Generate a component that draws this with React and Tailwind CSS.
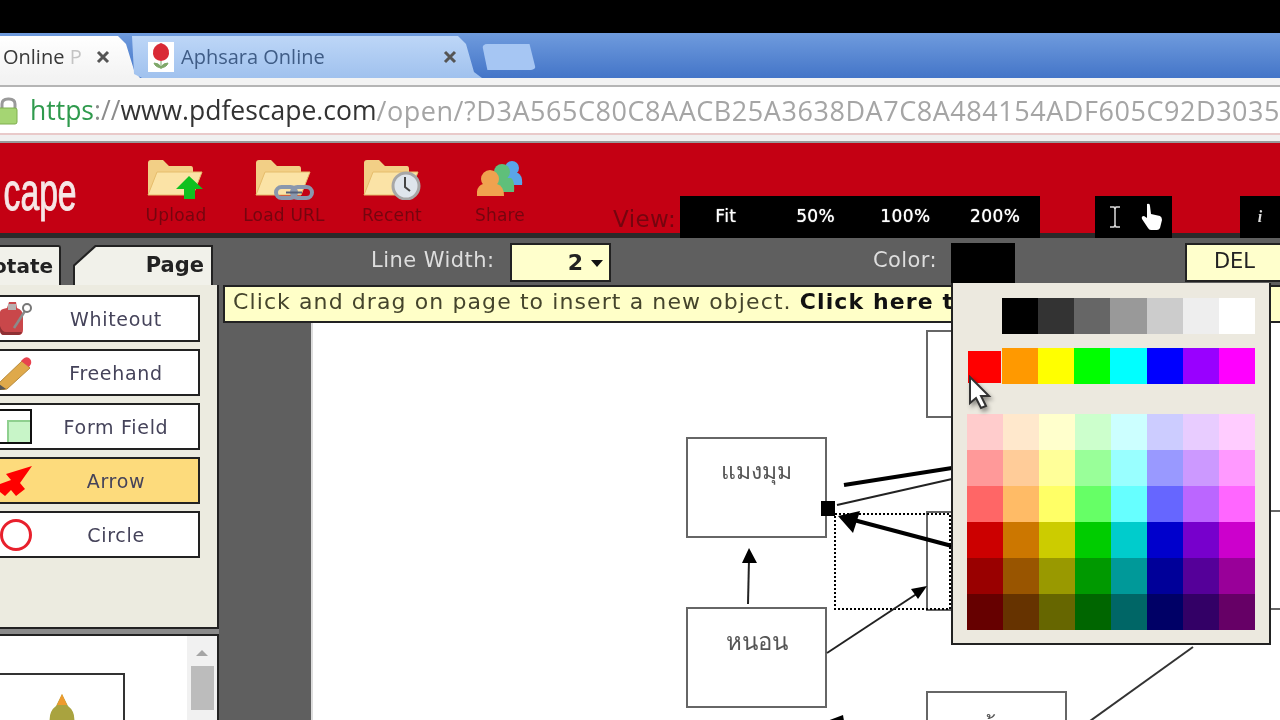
const UI = "font-['DejaVu_Sans',sans-serif]";

const GRAYS = ['#000000', '#333333', '#666666', '#999999', '#cccccc', '#eeeeee', '#ffffff'];
const HUES = ['#ff9900', '#ffff00', '#00ff00', '#00ffff', '#0000ff', '#9900ff', '#ff00ff'];
const SHADES = [
  '#ffcccc', '#ffe8cc', '#ffffcc', '#ccffcc', '#ccffff', '#ccccff', '#e8ccff', '#ffccff',
  '#ff9999', '#ffcc99', '#ffff99', '#99ff99', '#99ffff', '#9999ff', '#cc99ff', '#ff99ff',
  '#ff6666', '#ffbb66', '#ffff66', '#66ff66', '#66ffff', '#6666ff', '#bb66ff', '#ff66ff',
  '#cc0000', '#cc7700', '#cccc00', '#00cc00', '#00cccc', '#0000cc', '#7700cc', '#cc00cc',
  '#990000', '#995500', '#999900', '#009900', '#009999', '#000099', '#550099', '#990099',
  '#660000', '#663300', '#666600', '#006600', '#006666', '#000066', '#330066', '#660066',
];

function Folder({ children }) {
  return (
    <svg width="60" height="42" viewBox="0 0 60 42">
      <path d="M2 5q0-3 3-3h12l6 6h22q2 0 2 3v26H2z" fill="#f2cf86" />
      <path d="M2 37 11 14h45l-9 23z" fill="#fbe3a6" stroke="#e6bd6c" />
      {children}
    </svg>
  );
}

function UploadIcon() {
  return (
    <Folder>
      <path d="M43 18 57 31h-8v10H38V31h-8z" fill="#0fc01f" />
    </Folder>
  );
}

function LinkIcon() {
  return (
    <Folder>
      <g fill="none" stroke="#8a97ad" strokeWidth="4">
        <rect x="22" y="29" width="20" height="11" rx="5.500" />
        <rect x="38" y="29" width="20" height="11" rx="5.500" />
      </g>
      <path d="M32 34.500h16" stroke="#56607a" strokeWidth="2" />
    </Folder>
  );
}

function RecentIcon() {
  return (
    <Folder>
      <circle cx="44" cy="28" r="13" fill="#dfe5ec" stroke="#a7a7a7" strokeWidth="3" />
      <path d="M43 19v10l5 4" fill="none" stroke="#444" strokeWidth="2" />
    </Folder>
  );
}

function ShareIcon() {
  return (
    <svg width="46" height="38" viewBox="0 0 46 38">
      <circle cx="35" cy="8" r="7" fill="#5aa5e8" />
      <path d="M27 13h14q5 3 4 12H30z" fill="#5aa5e8" />
      <circle cx="25" cy="12" r="8" fill="#5fbf7a" />
      <path d="M16 18h18q4 3 3 14H18z" fill="#5fbf7a" />
      <circle cx="13" cy="19" r="9" fill="#f0a24f" />
      <path d="M0 36q-1-10 6-12h14q7 2 7 12z" fill="#f0a24f" />
    </svg>
  );
}

function BottleIcon() {
  return (
    <svg width="32" height="34" viewBox="0 0 32 34">
      <path d="M9 0h7l1 6q6 2 6 8v14q0 5-5 5H4q-4 0-4-5V10q0-3 7-4z" fill="#c9474a" />
      <path d="M0 28q0 5 4 5h14q3 0 4-3H6q-4 0-6-6z" fill="#8e3034" />
      <path d="M8 2h8v6H8z" fill="#b9b0b0" />
      <path d="M14 26 25 9" stroke="#8b8b8b" strokeWidth="2.500" />
      <circle cx="27" cy="6" r="4" fill="#fff" stroke="#777" strokeWidth="2" />
    </svg>
  );
}

function PencilIcon() {
  return (
    <svg width="32" height="34" viewBox="0 0 32 34">
      <path d="M-1 27 22 5l8 7L7 33l-7 1z" fill="#dfa94a" stroke="#b88a3a" />
      <path d="M23 3q3-3 6-1 3 2 2 6l-2 3-8-6z" fill="#e8434e" />
      <path d="M-1 28l7 5-6 1z" fill="#555" />
    </svg>
  );
}

function FieldIcon() {
  return (
    <div className="flex h-[35px] w-[33px] items-end justify-end border-2 border-l-0 border-[#111] bg-white">
      <div className="h-[22px] w-[23px] border-l-2 border-t-2 border-[#8fd08f] bg-[#c8f5c8]" />
    </div>
  );
}

function ArrowIcon() {
  return (
    <svg width="32" height="34" viewBox="0 0 32 34">
      <path d="M32 2 6 10l5 6-11 4v8l5 4 6-6 5 6 9-7-5-6z" fill="#ff0000" />
    </svg>
  );
}

function CircleIcon() {
  return <div className="h-8 w-8 rounded-full border-[3px] border-[#e8202c] bg-white" />;
}

function ToolButton({ label, active, children }) {
  return (
    <div className={`flex h-[47px] w-[200px] items-center border-2 border-l-0 border-[#222] ${active ? 'bg-[#fddb7c]' : 'bg-white'}`}>
      <div className="flex w-[34px] shrink-0 items-center justify-center pr-[2px]">{children}</div>
      <span className={`flex-1 pt-[1px] text-center text-[19px] tracking-[0.7px] text-[#45435a] ${UI}`}>{label}</span>
    </div>
  );
}

function ToolbarItem({ label, children }) {
  return (
    <div className="flex w-[108px] flex-col items-center">
      <div className="flex h-[42px] items-center justify-center">{children}</div>
      <span className={`mt-[5px] whitespace-nowrap text-[17px] leading-5 tracking-[0.2px] text-[#75050f] ${UI}`}>{label}</span>
    </div>
  );
}

function TabClose({ className }) {
  return (
    <svg width="14" height="14" viewBox="0 0 14 14" className={className}>
      <path d="M2 2l10 10M12 2 2 12" stroke="#555" strokeWidth="3" />
    </svg>
  );
}

function Rose() {
  return (
    <div className="flex h-[30px] w-[26px] shrink-0 items-center justify-center bg-white">
      <svg width="20" height="28" viewBox="0 0 20 28">
        <path d="M10 0q9 3 8 11-1 6-8 7-7-1-8-7Q1 3 10 0z" fill="#d92a36" />
        <path d="M10 18v8M10 25q-6-1-7-5 5 0 7 4 2-4 7-4-1 4-7 5z" fill="#7fa86a" stroke="#7fa86a" />
      </svg>
    </div>
  );
}

function TabStrip() {
  return (
    <div className="flex h-[45px] shrink-0 items-end bg-gradient-to-b from-[#6f9bdd] to-[#4475c8]">
      <div className="flex h-[42px] w-[140px] items-center bg-gradient-to-b from-white to-[#f3f3f3] pl-[3px] [clip-path:polygon(0_0,118px_0,126px_8px,134px_34px,140px_100%,0_100%)]">
        <span className="w-[86px] whitespace-nowrap font-['Open_Sans',sans-serif] text-[20px] text-[#3a3a3a]">
          Online <span className="text-[#c4c4c4]">P</span>
        </span>
        <TabClose className="ml-[7px]" />
      </div>
      <div className="-ml-[8px] flex h-[42px] w-[350px] items-center bg-gradient-to-b from-[#bdd6f7] to-[#a0c1ee] pl-[16px] [clip-path:polygon(0_0,326px_0,334px_8px,342px_36px,350px_100%,10px_100%,2px_38px)]">
        <Rose />
        <span className="ml-[7px] w-[262px] font-['Open_Sans',sans-serif] text-[20px] text-[#3f5c86]">Aphsara Online</span>
        <TabClose />
      </div>
      <div className="mb-[8px] h-[26px] w-[54px] rounded-[5px] bg-[#a6c6f3] [clip-path:polygon(0_0,88%_0,100%_100%,10%_100%)]" />
    </div>
  );
}

function AddressBar() {
  return (
    <div className="shrink-0">
      <div className="h-[9px] border-b-2 border-[#b5b5b5] bg-[#f3f3f3]" />
      <div className="flex h-[46px] items-center overflow-hidden whitespace-nowrap bg-white pt-[2px] font-['Open_Sans',sans-serif] text-[26.500px]">
        <svg width="18" height="28" viewBox="0 0 18 28" className="mr-[12px] shrink-0">
          <path d="M2 12V7q0-5 6-5h1q6 0 6 5v5" fill="none" stroke="#9a9a9a" strokeWidth="3" />
          <rect x="-2" y="11" width="19" height="16" rx="2" fill="#a5d573" stroke="#7fae4e" />
        </svg>
        <span className="text-[#2f9a4d]">https</span>
        <span className="text-[#8c8c8c]">://</span>
        <span className="text-[#333]">www.pdfescape.com</span>
        <span className="text-[27px] tracking-[0.55px] text-[#a5a5a5]">/open/?D3A565C80C8AACB25A3638DA7C8A484154ADF605C92D3035</span>
      </div>
      <div className="h-[10px] border-y-2 border-t-[#e9caca] border-b-[#9a9a9a] bg-[#f0f0f0]" />
    </div>
  );
}

function RedToolbar() {
  return (
    <div className="flex h-[95px] shrink-0 items-end bg-[#c40013] shadow-[inset_0_-5px_0_#2a2a2a]">
      <div className="flex h-[95px] w-[77px] shrink-0 items-start justify-end pt-[22px]">
        <span className="origin-right scale-x-[0.66] font-['Liberation_Sans',sans-serif] text-[51px] leading-[56px] text-[#f6e6e6] [-webkit-text-stroke:1px_#f6e6e6]">cape</span>
      </div>
      <div className="ml-[45px] flex h-[95px] items-start pt-[15px]">
        <ToolbarItem label="Upload"><UploadIcon /></ToolbarItem>
        <ToolbarItem label="Load URL"><LinkIcon /></ToolbarItem>
        <ToolbarItem label="Recent"><RecentIcon /></ToolbarItem>
        <ToolbarItem label="Share"><ShareIcon /></ToolbarItem>
      </div>
      <span className={`mb-[5px] ml-[59px] w-[67px] text-[23px] leading-7 tracking-[0.4px] text-[#75050f] ${UI}`}>View:</span>
      <div className={`grid h-[42px] w-[360px] grid-cols-4 items-center bg-black pl-[1px] text-center text-[17px] tracking-[0.4px] text-white [text-shadow:0_0_1px_#fff] ${UI}`}>
        <span>Fit</span>
        <span>50%</span>
        <span>100%</span>
        <span>200%</span>
      </div>
      <div className="ml-[55px] flex h-[42px] w-[77px] items-center gap-[19px] bg-black pl-[13px]">
        <svg width="14" height="24" viewBox="0 0 14 24">
          <path d="M2 2h4l1 2 1-2h4M7 4v16M2 22h4l1-2 1 2h4" fill="none" stroke="#ddd" strokeWidth="1.500" />
        </svg>
        <svg width="22" height="28" viewBox="0 0 22 28">
          <path d="M6 1q3-1 3 2l1 8 9 2q2 1 2 4l-2 8q-1 2-3 2H10q-2 0-3-2l-6-9q-1-3 2-3l3 2z" fill="#fff" />
        </svg>
      </div>
      <div className="ml-[68px] flex h-[42px] w-[40px] items-center justify-center bg-black font-['Liberation_Serif',serif] text-[16px] font-bold italic text-[#ddd]">i</div>
    </div>
  );
}

function ColorPopover() {
  return (
    <div className="absolute left-0 top-[40px] z-10 flex h-[362px] w-[320px] flex-col border-2 border-t-0 border-[#222] bg-[#ece9df] pl-[14px] pt-[15px]">
      <div className="ml-[35px] grid w-[253px] grid-cols-7">
        {GRAYS.map((c) => (
          <div key={c} className="h-[36px]" style={{ background: c }} />
        ))}
      </div>
      <div className="mt-[14px] flex">
        <div className="ml-[1px] mt-[3px] h-[32px] w-[33px] bg-[#ff0000]" />
        <div className="ml-[1px] grid w-[253px] grid-cols-7">
          {HUES.map((c) => (
            <div key={c} className="h-[36px]" style={{ background: c }} />
          ))}
        </div>
      </div>
      <div className="mt-[30px] grid w-[288px] grid-cols-8">
        {SHADES.map((c) => (
          <div key={c} className="h-[36px]" style={{ background: c }} />
        ))}
      </div>
      <svg width="28" height="36" viewBox="0 0 28 36" className="absolute left-[15px] top-[92px] drop-shadow-[2px_3px_2px_rgba(0,0,0,0.4)]">
        <path d="M2 2v26l6-5 5 10 5-2-5-10h8z" fill="#fff" stroke="#333" strokeWidth="2" />
      </svg>
    </div>
  );
}

function OptionsBar() {
  return (
    <div className={`flex h-[47px] shrink-0 bg-[#5f5f5f] ${UI}`}>
      <div className="mt-[7px] flex h-[40px] w-[61px] items-center justify-end rounded-tr-[3px] border-2 border-b-0 border-l-0 border-[#222] bg-[#f1f1ea] pb-[1px] pr-[6px] text-[20px] font-bold text-[#222]">
        <span>otate</span>
      </div>
      <div className="ml-[12px] mt-[7px] flex h-[40px] w-[140px] items-center justify-end bg-[#222] [clip-path:polygon(22px_0,100%_0,100%_100%,0_100%,0_20px)]">
        <div className="mr-[2px] mt-[2px] flex h-[38px] w-[136px] items-center justify-end bg-[#f1f1ea] pr-[7px] text-[21px] font-bold text-[#222] [clip-path:polygon(21px_0,100%_0,100%_100%,0_100%,0_19px)]">
          Page
        </div>
      </div>
      <span className="ml-[158px] mt-[8px] w-[139px] text-[21px] leading-7 tracking-[0.45px] text-[#dedede]">Line Width:</span>
      <div className="mt-[5px] flex h-[39px] w-[101px] items-center justify-end gap-[8px] border-2 border-[#222] bg-[#ffffcc] pr-[6px] text-[22px] font-bold text-[#222]">
        <span>2</span>
        <span className="mt-[2px] h-0 w-0 border-x-[6px] border-t-[7px] border-x-transparent border-t-[#111]" />
      </div>
      <span className="ml-[262px] mt-[8px] w-[78px] text-[21px] leading-7 tracking-[0.4px] text-[#dedede]">Color:</span>
      <div className="relative mt-[5px] h-[42px] w-[64px] bg-black">
        <ColorPopover />
      </div>
      <div className="ml-[170px] mt-[5px] flex h-[39px] flex-1 items-center justify-center border-2 border-r-0 border-[#222] bg-[#ffffcc] pb-[1px] pl-[2px] text-[21px] text-[#222]">DEL</div>
    </div>
  );
}

function ToolPanel() {
  return (
    <div className="flex w-[219px] shrink-0 flex-col">
      <div className="flex h-[344px] shrink-0 flex-col gap-[7px] border-b-2 border-r-2 border-[#222] bg-[#ecebe0] pt-[10px]">
        <ToolButton label="Whiteout"><BottleIcon /></ToolButton>
        <ToolButton label="Freehand"><PencilIcon /></ToolButton>
        <ToolButton label="Form Field"><FieldIcon /></ToolButton>
        <ToolButton label="Arrow" active><ArrowIcon /></ToolButton>
        <ToolButton label="Circle"><CircleIcon /></ToolButton>
      </div>
      <div className="h-[5px] shrink-0 bg-[#8a8a8a]" />
      <div className="flex min-h-0 flex-1 border-r-2 border-t-2 border-[#222] bg-white">
        <div className="min-h-0 flex-1 pt-[37px]">
          <div className="flex h-[60px] w-[125px] justify-center border-r-2 border-t-2 border-[#333] pt-[19px]">
            <svg width="32" height="30" viewBox="0 0 32 30">
              <path d="M16 0 22 12q8 6 6 18H4Q2 18 10 12z" fill="#a9a33f" />
              <path d="M16 0l5 11H11z" fill="#ee9a2e" />
            </svg>
          </div>
        </div>
        <div className="flex w-[30px] flex-col items-center bg-[#f1f1f1] pt-[14px]">
          <span className="h-0 w-0 border-x-[6px] border-b-[6px] border-x-transparent border-b-[#a5a5a5]" />
          <div className="mt-[10px] h-[44px] w-[23px] bg-[#bcbcbc]" />
        </div>
      </div>
    </div>
  );
}

function DiagramBox({ className, children }) {
  return (
    <div className={`absolute flex justify-center border-2 border-[#666] bg-white pt-[19px] font-['Liberation_Serif',serif] text-[23px] leading-7 text-[#555] ${className}`}>
      {children}
    </div>
  );
}

function Diagram() {
  return (
    <div className="relative flex-1 overflow-hidden border-l-2 border-[#ddd] bg-white">
      <DiagramBox className="left-[373px] top-[114px] h-[101px] w-[141px]">แมงมุม</DiagramBox>
      <DiagramBox className="left-[373px] top-[284px] h-[101px] w-[141px] text-[24px]">หนอน</DiagramBox>
      <DiagramBox className="left-[613px] top-[7px] h-[88px] w-[141px]" />
      <DiagramBox className="left-[613px] top-[188px] h-[100px] w-[141px]" />
      <DiagramBox className="left-[613px] top-[368px] h-[101px] w-[141px]">ค้น</DiagramBox>
      <DiagramBox className="left-[853px] top-[187px] h-[100px] w-[141px]" />
      <svg className="absolute inset-0" width="967" height="398" viewBox="313 322 967 398">
        <path d="M844 484 952 467" stroke="#000" strokeWidth="4" />
        <path d="M837 504 952 478" stroke="#222" strokeWidth="2" />
        <rect x="835" y="513" width="115" height="95" fill="none" stroke="#000" strokeWidth="2" strokeDasharray="2 2" />
        <path d="M952 545 850 518" stroke="#000" strokeWidth="4" />
        <path d="M838 515 860 510 853 532z" fill="#000" />
        <path d="M748 603 749 558" stroke="#222" strokeWidth="2" />
        <path d="M749 547 757 562H742z" fill="#000" />
        <path d="M827 652 918 592" stroke="#222" strokeWidth="2" />
        <path d="M927 585 918 598 911 588z" fill="#000" />
        <path d="M1193 646 1090 720" stroke="#333" strokeWidth="2" />
        <path d="M827 720 843 714 844 720z" fill="#000" />
        <rect x="821" y="500" width="14" height="15" fill="#000" />
      </svg>
    </div>
  );
}

function Workspace() {
  return (
    <div className="flex min-h-0 flex-1 flex-col bg-[#5f5f5f]">
      <div className={`ml-[4px] flex h-[38px] shrink-0 items-center overflow-hidden whitespace-nowrap border-2 border-r-0 border-[#222] bg-[#ffffc8] pb-[5px] pl-[8px] text-[22px] tracking-[1.1px] text-[#45452c] ${UI}`}>
        <span>Click and drag on page to insert a new object.&nbsp;</span>
        <b className="text-[#111]">Click here to close</b>
      </div>
      <div className="flex min-h-0 flex-1">
        <div className="w-[92px] shrink-0" />
        <Diagram />
      </div>
    </div>
  );
}

export default function App() {
  return (
    <div className="flex h-[720px] w-[1280px] flex-col overflow-hidden bg-white blur-[0.5px]">
      <div className="h-[33px] shrink-0 bg-black" />
      <TabStrip />
      <AddressBar />
      <RedToolbar />
      <OptionsBar />
      <div className="flex min-h-0 flex-1">
        <ToolPanel />
        <Workspace />
      </div>
    </div>
  );
}
